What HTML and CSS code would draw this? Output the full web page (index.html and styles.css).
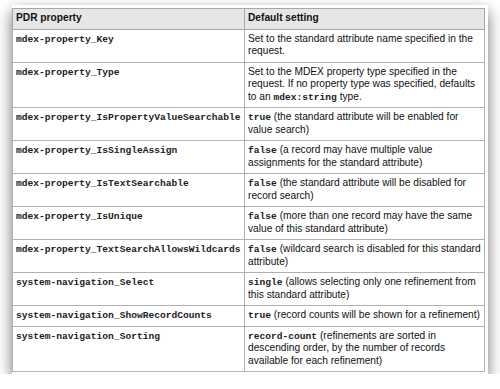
FILE: index.html
```html
<!DOCTYPE html>
<html>
<head>
    <title>PDR properties</title>
    <link rel="stylesheet" href="styles.css">
</head>
<body>
    <div class="sheet">
        <table class="props">
            <tr>
                <th class="name-col">PDR property</th>
                <th>Default setting</th>
            </tr>
            <tr>
                <td><code>mdex-property_Key</code></td>
                <td>Set to the standard attribute name specified in the request.</td>
            </tr>
            <tr>
                <td><code>mdex-property_Type</code></td>
                <td>Set to the MDEX property type specified in the request. If no property type was specified, defaults to an <code>mdex:string</code> type.</td>
            </tr>
            <tr>
                <td><code>mdex-property_IsPropertyValueSearchable</code></td>
                <td><code>true</code> (the standard attribute will be enabled for value search)</td>
            </tr>
            <tr>
                <td><code>mdex-property_IsSingleAssign</code></td>
                <td><code>false</code> (a record may have multiple value assignments for the standard attribute)</td>
            </tr>
            <tr>
                <td><code>mdex-property_IsTextSearchable</code></td>
                <td><code>false</code> (the standard attribute will be disabled for record search)</td>
            </tr>
            <tr>
                <td><code>mdex-property_IsUnique</code></td>
                <td><code>false</code> (more than one record may have the same value of this standard attribute)</td>
            </tr>
            <tr>
                <td><code>mdex-property_TextSearchAllowsWildcards</code></td>
                <td><code>false</code> (wildcard search is disabled for this standard attribute)</td>
            </tr>
            <tr>
                <td><code>system-navigation_Select</code></td>
                <td><code>single</code> (allows selecting only one refinement from this standard attribute)</td>
            </tr>
            <tr>
                <td><code>system-navigation_ShowRecordCounts</code></td>
                <td><code>true</code> (record counts will be shown for a refinement)</td>
            </tr>
            <tr>
                <td><code>system-navigation_Sorting</code></td>
                <td><code>record-count</code> (refinements are sorted in descending order, by the number of records available for each refinement)</td>
            </tr>
        </table>
    </div>
</body>
</html>
```

FILE: styles.css
```css
body {
    margin: 0;
    background-color: #ffffff;
    font-family: "Liberation Sans", Arial, sans-serif;
    color: #111;
}
.sheet {
    width: 473px;
    margin: 5px 0 0 12px;
    padding: 3px 3px 2px 0;
    background: white;
    box-shadow: 0 6px 14px rgba(0, 0, 0, 0.55);
}
.props {
    width: 473px;
    table-layout: fixed;
    border-collapse: collapse;
    border: 1px solid #9a9a9a;
    font-size: 10.2px;
    line-height: 12.5px;
}
.props th {
    background-color: #e6e6e6;
    text-align: left;
    font-weight: bold;
    padding: 3px 2px 4px 3px;
    border: 1px solid #a8a8a8;
}
.props td {
    vertical-align: top;
    text-align: left;
    padding: 3px 2px 4px 3px;
    border: 1px solid #b0b0b0;
}
.name-col {
    width: 226px;
}
code {
    font-family: "Liberation Mono", "Courier New", monospace;
    font-size: 9.6px;
    line-height: 1;
    font-weight: bold;
    color: #222;
    white-space: nowrap;
}
```
